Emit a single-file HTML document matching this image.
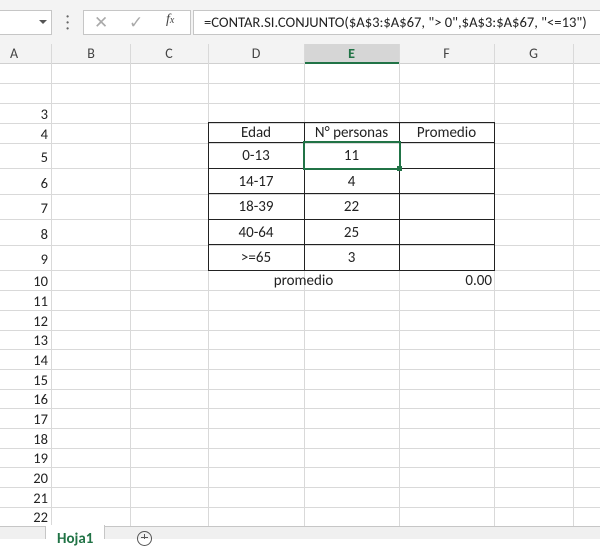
<!DOCTYPE html>
<html><head><style>
*{margin:0;padding:0;box-sizing:border-box}
body{width:600px;height:539px;overflow:hidden;background:#fff;font-family:Calibri,"Liberation Sans",sans-serif;font-size:15px;color:#222;position:relative}
.a{position:absolute}
.vl{position:absolute;width:1px;background:#d9d9d9;top:44px;height:482px}
.hl{position:absolute;height:1px;background:#d9d9d9;left:0;width:600px}
.rn{position:absolute;right:552px;text-align:right;width:40px;font-size:14.5px}
.ch{position:absolute;top:44px;height:20px;text-align:center;line-height:20px;font-size:14px;color:#444}
.c{position:absolute;text-align:center;font-size:15px}
</style></head><body>
<div class="a" style="left:0;top:0;width:600px;height:44px;background:#f3f3f3"></div>
<div class="a" style="left:-2px;top:10px;width:54px;height:25px;background:#fff;border:1px solid #c6c6c6"></div>
<div class="a" style="left:39px;top:20px;width:0;height:0;border-left:4px solid transparent;border-right:4px solid transparent;border-top:4px solid #555"></div>
<div class="a" style="left:66px;top:14px;font-size:12px;color:#666;line-height:6px;font-weight:bold">·<br>·<br>·</div>
<div class="a" style="left:83px;top:10px;width:108px;height:25px;background:#fff;border:1px solid #c6c6c6"></div>
<div class="a" style="left:94px;top:12px;color:#aaa;font-size:17px">✕</div>
<div class="a" style="left:129px;top:12px;color:#aaa;font-size:17px">✓</div>
<div class="a" style="left:166px;top:12px;color:#444;font-size:14px;font-style:italic;font-family:'Liberation Serif',serif">f<span style="font-size:10px">x</span></div>
<div class="a" style="left:193px;top:10px;width:410px;height:25px;background:#fff;border:1px solid #c6c6c6"></div>
<div class="a" style="left:204px;top:13px;font-size:14.6px;color:#222;white-space:nowrap">=CONTAR.SI.CONJUNTO($A$3:$A$67, "&gt; 0",$A$3:$A$67, "&lt;=13")</div>
<div class="a" style="left:0;top:44px;width:600px;height:20px;background:#f3f3f3;border-bottom:1px solid #d0d0d0"></div>
<div class="a" style="left:304px;top:44px;width:95px;height:20px;background:#d6d6d6;border-bottom:2px solid #217346"></div>
<div class="ch" style="left:0;width:28px">A</div>
<div class="ch" style="left:52px;width:78px">B</div>
<div class="ch" style="left:130px;width:78px">C</div>
<div class="ch" style="left:208px;width:96px">D</div>
<div class="ch" style="left:304px;width:95px;color:#217346;font-weight:bold">E</div>
<div class="ch" style="left:399px;width:95px">F</div>
<div class="ch" style="left:494px;width:79px">G</div>
<div class="vl" style="left:51px"></div><div class="vl" style="left:130px"></div><div class="vl" style="left:208px"></div><div class="vl" style="left:304px"></div><div class="vl" style="left:399px"></div><div class="vl" style="left:494px"></div><div class="vl" style="left:573px"></div>
<div class="hl" style="top:83px"></div><div class="hl" style="top:103px"></div><div class="hl" style="top:123px"></div>
<div class="hl" style="top:143px"></div><div class="hl" style="top:168px"></div><div class="hl" style="top:194px"></div><div class="hl" style="top:219px"></div><div class="hl" style="top:245px"></div><div class="hl" style="top:270px"></div><div class="hl" style="top:290px"></div>
<div class="hl" style="top:310px"></div><div class="hl" style="top:330px"></div><div class="hl" style="top:349px"></div><div class="hl" style="top:369px"></div><div class="hl" style="top:389px"></div><div class="hl" style="top:408px"></div><div class="hl" style="top:428px"></div><div class="hl" style="top:448px"></div><div class="hl" style="top:467px"></div><div class="hl" style="top:487px"></div><div class="hl" style="top:507px"></div>
<div class="rn" style="top:105px">3</div><div class="rn" style="top:125px">4</div><div class="rn" style="top:148px">5</div><div class="rn" style="top:174px">6</div><div class="rn" style="top:199px">7</div><div class="rn" style="top:225px">8</div><div class="rn" style="top:250px">9</div><div class="rn" style="top:272px">10</div>
<div class="rn" style="top:292px">11</div><div class="rn" style="top:312px">12</div><div class="rn" style="top:331px">13</div><div class="rn" style="top:351px">14</div><div class="rn" style="top:371px">15</div><div class="rn" style="top:390px">16</div><div class="rn" style="top:410px">17</div><div class="rn" style="top:430px">18</div><div class="rn" style="top:449px">19</div><div class="rn" style="top:469px">20</div><div class="rn" style="top:489px">21</div><div class="rn" style="top:508px">22</div>
<svg class="a" style="left:0;top:0" width="600" height="539">
<g stroke="#222" stroke-width="1" fill="none">
<rect x="208.5" y="122.5" width="286" height="148"/>
<line x1="304.5" y1="122" x2="304.5" y2="271"/><line x1="399.5" y1="122" x2="399.5" y2="271"/>
<line x1="208" y1="142.5" x2="495" y2="142.5"/><line x1="208" y1="168.5" x2="495" y2="168.5"/><line x1="208" y1="193.5" x2="495" y2="193.5"/><line x1="208" y1="219.5" x2="495" y2="219.5"/><line x1="208" y1="244.5" x2="495" y2="244.5"/>
</g>
<rect x="304" y="142" width="96" height="27" fill="none" stroke="#217346" stroke-width="2"/>
<rect x="397" y="166" width="5" height="5" fill="#217346"/>
</svg>
<div class="c" style="left:208px;width:96px;top:124px">Edad</div>
<div class="c" style="left:304px;width:95px;top:124px">N° personas</div>
<div class="c" style="left:399px;width:95px;top:124px">Promedio</div>
<div class="c" style="left:208px;width:96px;top:147px">0-13</div><div class="c" style="left:304px;width:95px;top:147px">11</div>
<div class="c" style="left:208px;width:96px;top:173px">14-17</div><div class="c" style="left:304px;width:95px;top:173px">4</div>
<div class="c" style="left:208px;width:96px;top:198px">18-39</div><div class="c" style="left:304px;width:95px;top:198px">22</div>
<div class="c" style="left:208px;width:96px;top:224px">40-64</div><div class="c" style="left:304px;width:95px;top:224px">25</div>
<div class="c" style="left:208px;width:96px;top:249px">&gt;=65</div><div class="c" style="left:304px;width:95px;top:249px">3</div>
<div class="c" style="left:208px;width:191px;top:272px">promedio</div>
<div class="a" style="left:430px;width:62px;top:272px;text-align:right">0.00</div>
<div class="a" style="left:0;top:526px;width:600px;height:13px;background:#f0f0f0;border-top:1px solid #c6c6c6"></div>
<div class="a" style="left:0;top:526px;width:46px;height:13px;border-right:1px solid #c6c6c6"></div>
<div class="a" style="left:46px;top:525px;width:59px;height:14px;background:#fff;border-right:1px solid #c6c6c6"></div>
<div class="a" style="left:57px;top:530px;color:#217346;font-weight:bold;font-size:15px">Hoja1</div>
<div class="a" style="left:137px;top:531px;width:15px;height:15px;border:1px solid #555;border-radius:50%"></div>
<div class="a" style="left:144px;top:534px;width:1px;height:5px;background:#555"></div>
<div class="a" style="left:141px;top:537px;width:7px;height:1px;background:#555"></div>
</body></html>
